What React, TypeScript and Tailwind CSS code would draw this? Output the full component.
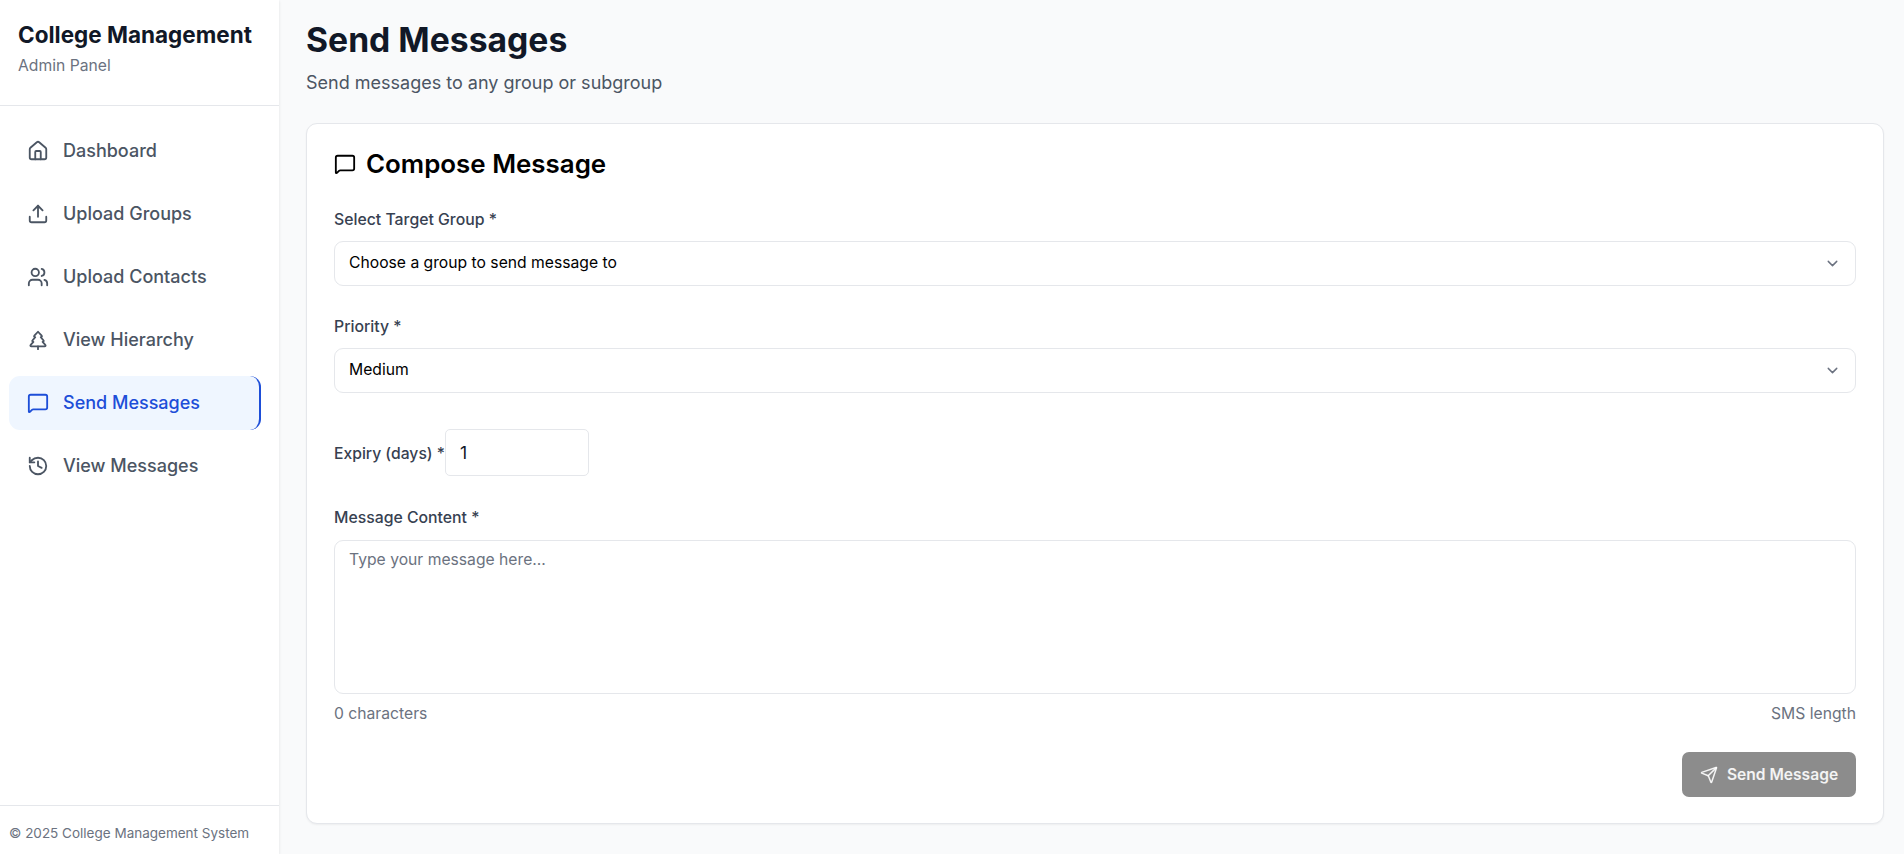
import React from 'react';
import { Home, Upload, Users, TreePine, MessageSquare, History, ChevronDown, Send } from 'lucide-react';

const navItems = [
  { label: 'Dashboard', icon: Home },
  { label: 'Upload Groups', icon: Upload },
  { label: 'Upload Contacts', icon: Users },
  { label: 'View Hierarchy', icon: TreePine },
  { label: 'Send Messages', icon: MessageSquare, active: true },
  { label: 'View Messages', icon: History },
];

function SelectBox({ value }: { value: string }) {
  return (
    <button
      type="button"
      className="w-full h-[45px] px-[14px] pb-[1px] flex items-center justify-between bg-white border border-[#e5e7eb] rounded-[9px] text-[15.7px] text-black"
    >
      <span>{value}</span>
      <ChevronDown className="w-[17px] h-[17px] text-[#6b7280]" />
    </button>
  );
}

export default function App() {
  return (
    <div className="flex h-[854px] overflow-hidden bg-[#f9fafb] font-['Inter',sans-serif]">
      <aside className="w-[279px] flex-shrink-0 flex flex-col bg-white shadow-[0_1px_3px_rgba(0,0,0,0.1)]">
        <div className="h-[106px] px-[18px] pt-[21px] border-b border-[#e5e7eb]">
          <h2 className="text-[22.5px] leading-[28px] font-bold text-[#111827]">College Management</h2>
          <p className="mt-[7px] text-[15.7px] leading-[20px] text-[#6b7280]">Admin Panel</p>
        </div>
        <nav className="flex-1 px-[9px] pt-[18px] flex flex-col gap-[9px]">
          {navItems.map(({ label, icon: Icon, active }) => (
            <div
              key={label}
              className={`w-[252px] h-[54px] px-[18px] flex items-center gap-[16px] rounded-[11px] text-[18px] font-medium ${
                active ? 'bg-[#eff6ff] text-[#1d4ed8] border-r-2 border-[#1d4ed8]' : 'text-[#4b5563]'
              }`}
            >
              <Icon className="w-[22px] h-[22px] -mr-[1px]" />
              <span className="-ml-[1px] -mt-[1px]">{label}</span>
            </div>
          ))}
        </nav>
        <div className="h-[49px] pt-[6px] px-[9px] flex items-center border-t border-[#e5e7eb] text-[13.5px] text-[#6b7280]">
          © 2025 College Management System
        </div>
      </aside>

      <main className="flex-1 pl-[27px] pr-[20px]">
        <h1 className="mt-[20px] text-[33.7px] leading-[40px] font-bold text-[#111827]">Send Messages</h1>
        <p className="mt-[11px] text-[18px] leading-[24px] text-[#4b5563]">Send messages to any group or subgroup</p>

        <section className="mt-[28px] h-[701px] px-[27px] pt-[22px] bg-white border border-[#e5e7eb] rounded-[11px] shadow-[0_1px_2px_rgba(0,0,0,0.05)]">
          <div className="flex items-center gap-[10px] h-[36px]">
            <MessageSquare className="w-[22px] h-[22px] text-black" />
            <h3 className="text-[25.9px] leading-[32px] font-semibold text-black">Compose Message</h3>
          </div>

          <label className="block mt-[28px] mb-[11px] text-[15.8px] leading-[20px] font-medium text-[#374151]">Select Target Group *</label>
          <SelectBox value="Choose a group to send message to" />

          <label className="block mt-[31px] mb-[11px] text-[15.8px] leading-[20px] font-medium text-[#374151]">Priority *</label>
          <SelectBox value="Medium" />

          <div className="mt-[36px] flex items-center">
            <label className="pt-[2px] text-[15.7px] leading-[20px] font-medium text-[#374151]">Expiry (days) *</label>
            <input
              type="text"
              readOnly
              value="1"
              className="w-[144px] h-[47px] px-[14px] bg-white border border-[#e5e7eb] rounded-[5px] text-[17.6px] text-[#111827] outline-none"
            />
          </div>

          <label className="block mt-[32px] mb-[12px] text-[15.8px] leading-[20px] font-medium text-[#374151]">Message Content *</label>
          <textarea
            readOnly
            placeholder="Type your message here..."
            className="block w-full h-[154px] px-[14px] py-[9px] bg-white border border-[#e5e7eb] rounded-[9px] text-[15.7px] leading-[20px] placeholder:text-[#6b7280] outline-none resize-none"
          />

          <div className="mt-[10px] flex justify-between text-[15.7px] leading-[20px] text-[#6b7280]">
            <span>0 characters</span>
            <span>SMS length</span>
          </div>

          <div className="mt-[28px] flex justify-end">
            <button
              type="button"
              disabled
              className="w-[174px] h-[45px] flex items-center justify-center gap-[9px] rounded-[7px] bg-[#8c8c8c] text-white/90 text-[15.6px] font-semibold"
            >
              <Send className="w-[18px] h-[18px]" />
              Send Message
            </button>
          </div>
        </section>
      </main>
    </div>
  );
}
